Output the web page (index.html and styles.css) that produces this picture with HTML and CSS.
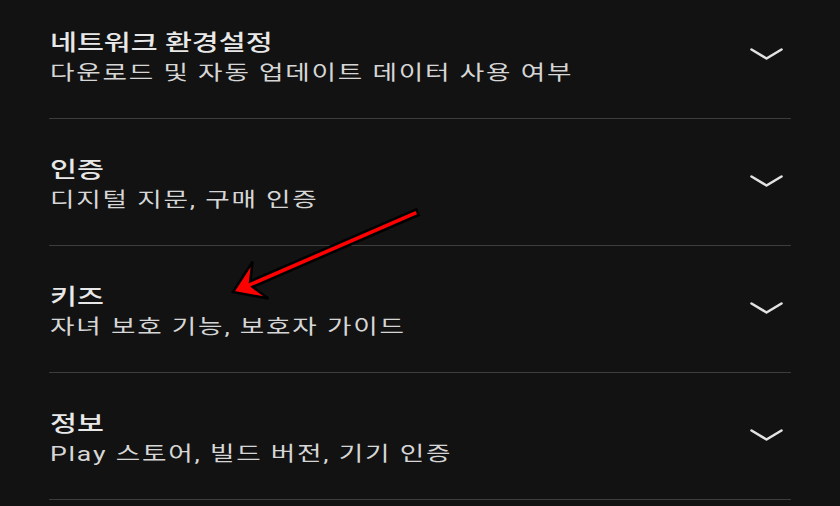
FILE: index.html
```html
<!DOCTYPE html>
<html lang="ko">
<head>
<meta charset="utf-8">
<link rel="stylesheet" href="styles.css">
</head>
<body>
<div class="screen">
  <ul class="list">
    <li class="row">
      <div class="text">
        <span class="title">네트워크 환경설정</span>
        <span class="sub">다운로드 및 자동 업데이트 데이터 사용 여부</span>
      </div>
      <svg class="chev" viewBox="0 0 33 12" width="33" height="12"><polyline points="1.5,1.5 16.5,10.5 31.5,1.5"/></svg>
    </li>
    <li class="row">
      <div class="text">
        <span class="title">인증</span>
        <span class="sub">디지털 지문, 구매 인증</span>
      </div>
      <svg class="chev" viewBox="0 0 33 12" width="33" height="12"><polyline points="1.5,1.5 16.5,10.5 31.5,1.5"/></svg>
    </li>
    <li class="row">
      <div class="text">
        <span class="title">키즈</span>
        <span class="sub">자녀 보호 기능, 보호자 가이드</span>
      </div>
      <svg class="chev" viewBox="0 0 33 12" width="33" height="12"><polyline points="1.5,1.5 16.5,10.5 31.5,1.5"/></svg>
    </li>
    <li class="row">
      <div class="text">
        <span class="title">정보</span>
        <span class="sub">Play 스토어, 빌드 버전, 기기 인증</span>
      </div>
      <svg class="chev" viewBox="0 0 33 12" width="33" height="12"><polyline points="1.5,1.5 16.5,10.5 31.5,1.5"/></svg>
    </li>
  </ul>
  <svg class="arrow" width="840" height="506" viewBox="0 0 840 506">
    <polygon points="233,292 252.6,261.7 250.2,281.3 416.3,209.4 418.7,215 252.6,286.9 268.4,298.5"/>
  </svg>
</div>
</body>
</html>
```

FILE: styles.css
```css
html, body {
  margin: 0;
  padding: 0;
  background: #121212;
}
.screen {
  position: relative;
  width: 840px;
  height: 506px;
  overflow: hidden;
  background: #121212;
  font-family: Roboto, "Noto Sans CJK KR", sans-serif;
}
.list {
  list-style: none;
  margin: -8px 49px 0 49px;
  padding: 0;
}
.row {
  display: flex;
  align-items: center;
  justify-content: space-between;
  height: 126px;
  border-bottom: 1px solid #3d3d3d;
}
.text {
  display: flex;
  flex-direction: column;
  padding-top: 5px;
  padding-left: 1px;
}
.title,
.sub {
  display: inline-block;
  transform: scaleX(1.33);
  transform-origin: left center;
  white-space: nowrap;
}
.title {
  font-size: 22px;
  line-height: 31px;
  font-weight: 500;
  color: #e8e8e8;
}
.sub {
  font-size: 20px;
  line-height: 31px;
  letter-spacing: 1.35px;
  color: #d6d6d6;
}
.chev {
  margin-right: 8px;
  margin-bottom: 2px;
  fill: none;
  stroke: #e2e2e2;
  stroke-width: 2.6;
  stroke-linecap: round;
  stroke-linejoin: round;
}
.arrow {
  position: absolute;
  left: 0;
  top: 0;
  pointer-events: none;
}
.arrow polygon {
  fill: #ff0000;
  stroke: #000;
  stroke-width: 2.5;
  stroke-linejoin: miter;
}
```
